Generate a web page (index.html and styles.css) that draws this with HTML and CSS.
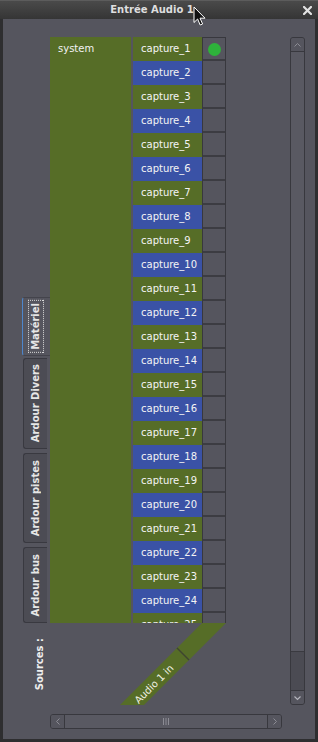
FILE: index.html
```html
<!DOCTYPE html>
<html lang="fr">
<head>
<meta charset="utf-8">
<title>Entrée Audio 1</title>
<link rel="stylesheet" href="styles.css">
</head>
<body>
<div class="window">
  <div class="titlebar">
    <span class="title">Entrée Audio 1</span>
    <svg class="close" width="9" height="9" viewBox="0 0 9 9"><path d="M1 1 L8 8 M8 1 L1 8" stroke="#e2e2e2" stroke-width="2.2" stroke-linecap="square"/></svg>
  </div>
  <div class="content">
    <div class="main">
      <div class="leftcol">
        <div class="tabs">
          <div class="tab active t1"><span class="tablabel focus">Matériel</span></div>
          <div class="tab t2"><span class="tablabel">Ardour Divers</span></div>
          <div class="tab t3"><span class="tablabel">Ardour pistes</span></div>
          <div class="tab t4"><span class="tablabel">Ardour bus</span></div>
        </div>
        <div class="sources"><span class="vlabel">Sources :</span></div>
      </div>
      <div class="center">
        <div class="matrix">
          <div class="sys">system</div>
          <div class="ports">
            <div class="port g">capture_1</div>
            <div class="port b">capture_2</div>
            <div class="port g">capture_3</div>
            <div class="port b">capture_4</div>
            <div class="port g">capture_5</div>
            <div class="port b">capture_6</div>
            <div class="port g">capture_7</div>
            <div class="port b">capture_8</div>
            <div class="port g">capture_9</div>
            <div class="port b">capture_10</div>
            <div class="port g">capture_11</div>
            <div class="port b">capture_12</div>
            <div class="port g">capture_13</div>
            <div class="port b">capture_14</div>
            <div class="port g">capture_15</div>
            <div class="port b">capture_16</div>
            <div class="port g">capture_17</div>
            <div class="port b">capture_18</div>
            <div class="port g">capture_19</div>
            <div class="port b">capture_20</div>
            <div class="port g">capture_21</div>
            <div class="port b">capture_22</div>
            <div class="port g">capture_23</div>
            <div class="port b">capture_24</div>
            <div class="port g">capture_25</div>
          </div>
          <div class="cells">
            <div class="cell"><span class="dot"></span></div>
            <div class="cell"></div><div class="cell"></div><div class="cell"></div><div class="cell"></div>
            <div class="cell"></div><div class="cell"></div><div class="cell"></div><div class="cell"></div>
            <div class="cell"></div><div class="cell"></div><div class="cell"></div><div class="cell"></div>
            <div class="cell"></div><div class="cell"></div><div class="cell"></div><div class="cell"></div>
            <div class="cell"></div><div class="cell"></div><div class="cell"></div><div class="cell"></div>
            <div class="cell"></div><div class="cell"></div><div class="cell"></div><div class="cell"></div>
          </div>
        </div>
        <svg class="diag" width="176" height="82" viewBox="0 0 176 82">
          <polygon points="152,0 176,0 94,82 70,82" fill="#566d27"/>
          <line x1="127" y1="25" x2="139" y2="37" stroke="#3e4530" stroke-width="1.4"/>
          <text class="diagtext" transform="translate(104,61) rotate(-45)" text-anchor="middle" dominant-baseline="central">Audio 1 in</text>
        </svg>
      </div>
      <div class="vscroll">
        <div class="sbtn up"><svg width="9" height="6" viewBox="0 0 9 6"><path d="M1.5 4.5 L4.5 1.5 L7.5 4.5" fill="none" stroke="#8c8c94" stroke-width="1"/></svg></div>
        <div class="vslider"></div>
        <div class="vtrough"></div>
        <div class="sbtn down"><svg width="9" height="6" viewBox="0 0 9 6"><path d="M1.5 1.5 L4.5 4.5 L7.5 1.5" fill="none" stroke="#b4b4bc" stroke-width="1.2"/></svg></div>
      </div>
    </div>
    <div class="hscroll">
      <div class="hbtn left"><svg width="6" height="9" viewBox="0 0 6 9"><path d="M4.5 1.5 L1.5 4.5 L4.5 7.5" fill="none" stroke="#8c8c94" stroke-width="1"/></svg></div>
      <div class="hslider"><svg width="8" height="7" viewBox="0 0 8 7"><path d="M1.5 0 V7 M4 0 V7 M6.5 0 V7" stroke="#8c8c94" stroke-width="1"/></svg></div>
      <div class="hbtn right"><svg width="6" height="9" viewBox="0 0 6 9"><path d="M1.5 1.5 L4.5 4.5 L1.5 7.5" fill="none" stroke="#8c8c94" stroke-width="1"/></svg></div>
    </div>
  </div>
  <svg class="cursor" width="13" height="21" viewBox="0 0 13 21">
    <path d="M1 1 L1 16.5 L4.6 13 L7.2 19 L9.6 18 L7 12.2 L12 12.2 Z" fill="#111" stroke="#fff" stroke-width="1" stroke-linejoin="round"/>
  </svg>
</div>
</body>
</html>
```

FILE: styles.css
```css
* { box-sizing: border-box; }
html, body { margin: 0; padding: 0; }
body {
  width: 318px;
  height: 742px;
  overflow: hidden;
  background: #2e2e2e;
  font-family: "DejaVu Sans", "Noto Sans", sans-serif;
  font-size: 10px;
  color: #f0f0f0;
}
.window {
  position: relative;
  width: 318px;
  height: 742px;
  display: flex;
  flex-direction: column;
  background: #2e2e30;
}
.titlebar {
  height: 19px;
  flex: none;
  display: flex;
  align-items: center;
  justify-content: center;
  padding-right: 14px;
  background: linear-gradient(#4a4a4a, #353535);
  border-top: 1px solid #5c5c5c;
  position: relative;
}
.title {
  font-weight: bold;
  font-size: 10px;
  color: #dedede;
  line-height: 18px;
}
.close {
  position: absolute;
  right: 6px;
  top: 5px;
}
.content {
  flex: 1;
  margin: 0 3px 3px 3px;
  background: #55555e;
  display: flex;
  flex-direction: column;
}
.main {
  display: flex;
  padding: 18px 0 0 19px;
}
.leftcol {
  width: 28px;
  display: flex;
  flex-direction: column;
}
.tabs {
  height: 586px;
  display: flex;
  flex-direction: column;
  justify-content: flex-end;
}
.tab {
  display: flex;
  align-items: center;
  justify-content: center;
  background: #4c4c54;
  border: 1px solid #393940;
  border-right: none;
  border-radius: 3px 0 0 3px;
  margin-left: 1px;
  width: 24px;
}
.tab.active {
  margin-left: 0;
  width: 28px;
  background: #55555e;
  border-left: 1px solid #4d86cc;
  border-top-color: #44444c;
  border-bottom-color: #44444c;
}
.t1 { height: 59px; margin-bottom: 2px; }
.t2 { height: 91px; margin-bottom: 4px; }
.t3 { height: 90px; margin-bottom: 4px; }
.t4 { height: 76px; }
.tablabel {
  writing-mode: vertical-rl;
  transform: rotate(180deg);
  font-weight: bold;
  font-size: 10px;
  line-height: 12px;
  color: #e6e6e6;
  white-space: nowrap;
}
.tab.active .tablabel { margin-left: -2px; }
.focus {
  outline: 1px dotted #d8d8d8;
  outline-offset: 1px;
  padding: 1px 0;
}
.sources {
  height: 82px;
  padding: 15px 0 0 12px;
}
.vlabel {
  display: block;
  writing-mode: vertical-rl;
  transform: rotate(180deg);
  font-weight: bold;
  font-size: 10px;
  line-height: 12px;
  color: #eeeeee;
  white-space: nowrap;
}
.center {
  width: 176px;
  display: flex;
  flex-direction: column;
}
.matrix {
  height: 586px;
  overflow: hidden;
  display: flex;
}
.sys {
  width: 81px;
  margin-right: 2px;
  background: #566d27;
  line-height: 24px;
  padding-left: 8px;
  color: #f2f2f2;
}
.ports { width: 69px; }
.port {
  height: 24px;
  line-height: 24px;
  padding-left: 8px;
  color: #f4f4f4;
  white-space: nowrap;
}
.port.g { background: #566d27; }
.port.b { background: #3a52a6; }
.cells {
  width: 24px;
  border-left: 1px solid #38383e;
  border-right: 1px solid #38383e;
  border-top: 1px solid #38383e;
  background: #55555e;
}
.cell {
  height: 24px;
  border-bottom: 2px solid #3c3c42;
  display: flex;
  align-items: center;
  justify-content: center;
}
.cell:first-child { height: 23px; }
.dot {
  width: 13px;
  height: 13px;
  border-radius: 50%;
  background: #2eb23b;
  margin-left: 1px;
  margin-top: 1px;
}
.diag { display: block; }
.diagtext {
  font-family: "DejaVu Sans", sans-serif;
  font-size: 10px;
  fill: #f2f2e4;
}
.vscroll {
  width: 15px;
  height: 668px;
  margin-left: 64px;
  border: 1px solid #38383e;
  border-radius: 3px;
  display: flex;
  flex-direction: column;
  overflow: hidden;
  background: #4b4b53;
}
.sbtn {
  height: 14px;
  flex: none;
  background: #55555e;
  display: flex;
  align-items: center;
  justify-content: center;
}
.sbtn.up { border-bottom: 1px solid #38383e; }
.sbtn.down { border-top: 1px solid #38383e; }
.vslider {
  height: 600px;
  flex: none;
  background: #595962;
  border-bottom: 1px solid #3a3a40;
}
.vtrough { flex: 1; background: #4b4b53; }
.hscroll {
  margin: 9px 0 0 47px;
  width: 232px;
  height: 15px;
  border: 1px solid #38383e;
  border-radius: 3px;
  display: flex;
  overflow: hidden;
}
.hbtn {
  width: 14px;
  flex: none;
  background: #55555e;
  display: flex;
  align-items: center;
  justify-content: center;
}
.hbtn.left { border-right: 1px solid #38383e; }
.hbtn.right { border-left: 1px solid #38383e; }
.hslider {
  flex: 1;
  background: #595962;
  display: flex;
  align-items: center;
  justify-content: center;
}
.cursor {
  position: absolute;
  left: 193px;
  top: 6px;
}
```
